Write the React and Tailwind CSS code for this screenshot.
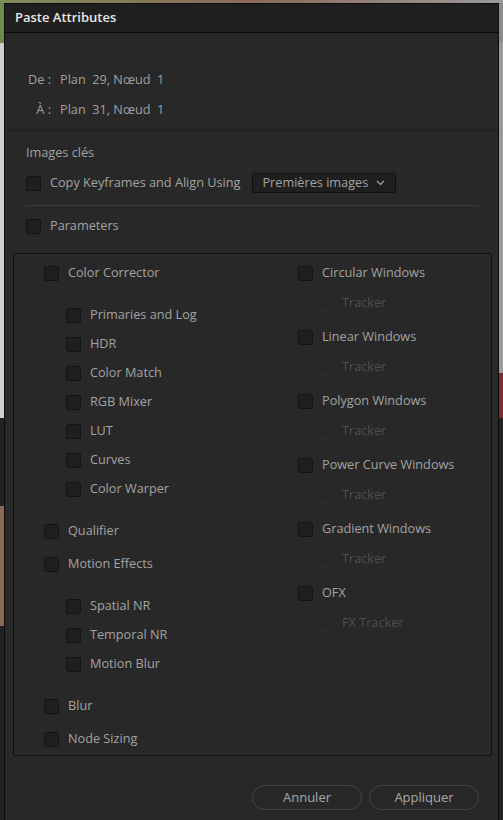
import React from 'react';

const Box = ({ disabled }) => (
    <span
        className={`block w-[15px] h-[15px] shrink-0 rounded-[2px] border ${disabled ? 'border-[#2c2c2c] bg-[#272727]' : 'border-[#141414] bg-[#1f1f1f]'}`}
    />
);

const Check = ({ label, disabled, className = '' }) => (
    <div className={`flex items-center h-[20px] gap-[9px] ${className}`}>
        <Box disabled={disabled} />
        <span className={disabled ? 'text-[#4e4e4e]' : 'text-[#a3a3a3]'}>{label}</span>
    </div>
);

const leftItems = [
    { label: 'Color Corrector', mt: 'mt-0' },
    { label: 'Primaries and Log', sub: true, mt: 'mt-[22px]' },
    { label: 'HDR', sub: true, mt: 'mt-[9px]' },
    { label: 'Color Match', sub: true, mt: 'mt-[9px]' },
    { label: 'RGB Mixer', sub: true, mt: 'mt-[9px]' },
    { label: 'LUT', sub: true, mt: 'mt-[9px]' },
    { label: 'Curves', sub: true, mt: 'mt-[9px]' },
    { label: 'Color Warper', sub: true, mt: 'mt-[9px]' },
    { label: 'Qualifier', mt: 'mt-[22px]' },
    { label: 'Motion Effects', mt: 'mt-[13px]' },
    { label: 'Spatial NR', sub: true, mt: 'mt-[22px]' },
    { label: 'Temporal NR', sub: true, mt: 'mt-[9px]' },
    { label: 'Motion Blur', sub: true, mt: 'mt-[9px]' },
    { label: 'Blur', mt: 'mt-[22px]' },
    { label: 'Node Sizing', mt: 'mt-[13px]' },
];

const rightGroups = [
    ['Circular Windows', 'Tracker'],
    ['Linear Windows', 'Tracker'],
    ['Polygon Windows', 'Tracker'],
    ['Power Curve Windows', 'Tracker'],
    ['Gradient Windows', 'Tracker'],
    ['OFX', 'FX Tracker'],
];

export default function App() {
    return (
        <div
            className="w-[503px] h-[820px] overflow-hidden bg-[#1c1c1c] flex flex-col text-[12.7px]"
            style={{ fontFamily: '"Open Sans", "Noto Sans", sans-serif' }}
        >
            {/* backdrop peeking above the dialog */}
            <div className="h-[3px] shrink-0 bg-gradient-to-r from-[#7d8c5a] via-[#8a6a5a] to-[#9a9a9a]" />
            <div className="flex flex-1 min-h-0">
                <div className="w-[4px] shrink-0 flex flex-col">
                    <div className="h-[40px] bg-[#6f8a4e]" />
                    <div className="h-[375px] bg-[#cfcfcf]" />
                    <div className="h-[88px] bg-[#222]" />
                    <div className="h-[120px] bg-[#8a6a55]" />
                    <div className="flex-1 bg-[#222]" />
                </div>

                {/* Dialog */}
                <div className="w-[495px] shrink-0 bg-[#282828] border-x border-t border-[#0e0e0e] flex flex-col">
                    <div className="h-[29px] shrink-0 bg-[#1f1f1f] border-b border-[#0a0a0a] flex items-center pl-[10px]">
                        <span className="text-[#e8e8e8] font-semibold text-[13px]">Paste Attributes</span>
                    </div>

                    <div className="pl-[21px] pt-[37px] flex flex-col gap-[10px] text-[#a0a0a0]">
                        <div className="flex items-center h-[20px]">
                            <span className="w-[25px] text-right">De :</span>
                            <span className="ml-[9px]">{'Plan\u00a0\u00a029, Nœud\u00a0\u00a01'}</span>
                        </div>
                        <div className="flex items-center h-[20px]">
                            <span className="w-[25px] text-right">À :</span>
                            <span className="ml-[9px]">{'Plan\u00a0\u00a031, Nœud\u00a0\u00a01'}</span>
                        </div>
                    </div>

                    <div className="mt-[10px] border-t border-[#1e1e1e]" />

                    <div className="pl-[21px] mt-[12px]">
                        <div className="flex items-center h-[20px] text-[#a0a0a0]">Images clés</div>
                        <div className="flex items-center mt-[10px]">
                            <Check label="Copy Keyframes and Align Using" />
                            <div className="ml-[12px] w-[144px] h-[20px] rounded-[2px] border border-[#101010] bg-[#1f1f1f] flex items-center pl-[9px] text-[#a3a3a3]">
                                <span>Premières images</span>
                                <svg className="ml-[8px]" width="9" height="6" viewBox="0 0 9 6" fill="none" stroke="#a3a3a3" strokeWidth="1.2">
                                    <path d="M1 1l3.5 3.5L8 1" />
                                </svg>
                            </div>
                        </div>
                        <div className="mt-[12px] mr-[20px] border-t border-[#3b3b3b]" />
                        <Check label="Parameters" className="mt-[10px]" />
                    </div>

                    {/* Parameters box */}
                    <div className="ml-[8px] mt-[17px] w-[479px] h-[503px] shrink-0 rounded-[2px] border border-[#0f0f0f] flex pt-[9px]">
                        <div className="w-[284px] pl-[30px] flex flex-col">
                            {leftItems.map((it) => (
                                <Check key={it.label} label={it.label} className={`${it.mt} ${it.sub ? 'ml-[22px]' : ''}`} />
                            ))}
                        </div>
                        <div className="flex flex-col">
                            {rightGroups.map(([main, sub], i) => (
                                <div key={main} className={i === 0 ? '' : 'mt-[14px]'}>
                                    <Check label={main} />
                                    <Check label={sub} disabled className="mt-[10px] ml-[20px]" />
                                </div>
                            ))}
                        </div>
                    </div>

                    <div className="mt-[29px] flex justify-end gap-[7px] pr-[19px]">
                        <button className="w-[110px] h-[25px] rounded-full border border-[#454545] text-[#a8a8a8] text-[13px]">Annuler</button>
                        <button className="w-[110px] h-[25px] rounded-full border border-[#454545] text-[#a8a8a8] text-[13px]">Appliquer</button>
                    </div>
                </div>

                <div className="w-[4px] shrink-0 flex flex-col">
                    <div className="h-[40px] bg-[#8c8c8c]" />
                    <div className="h-[330px] bg-[#9a9a9a]" />
                    <div className="h-[45px] bg-[#7a2a30]" />
                    <div className="flex-1 bg-[#232323]" />
                </div>
            </div>
        </div>
    );
}
